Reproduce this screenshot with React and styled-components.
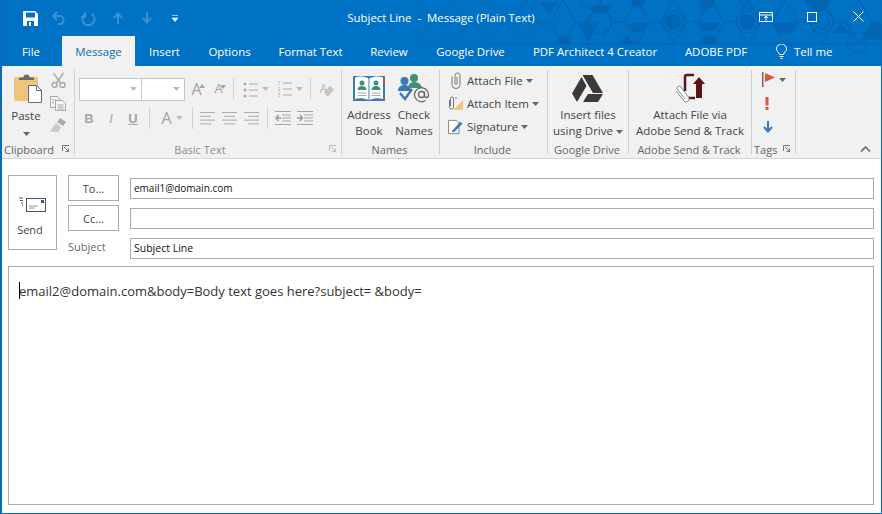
import styled, { createGlobalStyle } from "styled-components";

const GlobalStyle = createGlobalStyle`
  * { box-sizing: border-box; }
  html, body { margin: 0; padding: 0; background: #fff; }
  body { font-family: "Open Sans", "Noto Sans", "Liberation Sans", sans-serif; }
`;

const tabs = [
  { label: "File", width: 62 },
  { label: "Message", width: 73, active: true },
  { label: "Insert", width: 59 },
  { label: "Options", width: 71 },
  { label: "Format Text", width: 91 },
  { label: "Review", width: 66 },
  { label: "Google Drive", width: 97 },
  { label: "PDF Architect 4 Creator", width: 152 },
  { label: "ADOBE PDF", width: 90 },
];

const patternDark = [
  "540,2 558,2 549,14",
  "588,5 612,5 606,13 594,13",
  "578,23 598,23 588,43",
  "627,23 648,23 643,32 632,32",
  "772,23 797,23 790,33 779,33",
  "805,0 832,0 825,10 812,10",
  "841,23 850,33 832,33",
  "872,23 882,23 882,40 863,40",
  "700,23 720,23 714,31 700,31",
  "700,2 716,2 708,9 700,9",
  "620,44 634,44 627,34",
];

function TitlePattern() {
  const nodes = [];
  for (let x = 415; x < 900; x += 37) {
    nodes.push(x);
  }
  return (
    <Pattern viewBox="0 0 882 66" aria-hidden="true">
      <defs>
        <linearGradient id="patternFade" gradientUnits="userSpaceOnUse" x1="390" y1="0" x2="560" y2="0">
          <stop offset="0" stopColor="#0860a6" stopOpacity="0" />
          <stop offset="1" stopColor="#0860a6" stopOpacity="1" />
        </linearGradient>
      </defs>
      <g fill="#0066b3">
        {patternDark.map((p) => (
          <polygon key={p} points={p} />
        ))}
        <circle cx="673" cy="22" r="8" />
        <circle cx="747" cy="22" r="8" />
        <path d="M556 44a7 8 0 0 1 14 0z" />
        <path d="M700 44a9 9 0 0 1 18 0z" />
        <path d="M631 0a7 7 0 0 0 14 0z" />
        <path d="M699 0a8 8 0 0 0 16 0z" />
      </g>
      <g fill="none" stroke="url(#patternFade)" strokeWidth="1">
        {nodes.map((x) => (
          <path key={x} d={`M${x} 44L${x + 13} 22L${x} 0M${x + 13} 22H${x + 24}M${x + 37} 44L${x + 24} 22L${x + 37} 0M${x} 44H${x + 37}`} />
        ))}
        <circle cx="600" cy="22" r="11" />
        <circle cx="673" cy="22" r="11" />
        <circle cx="747" cy="22" r="11" />
        <circle cx="822" cy="22" r="11" />
        <circle cx="822" cy="22" r="7" />
        <circle cx="857" cy="42" r="10" />
        <circle cx="750" cy="0" r="9" />
        <circle cx="592" cy="0" r="9" />
      </g>
    </Pattern>
  );
}

const Ico = ({ w, h, children }) => (
  <svg width={w} height={h} viewBox={`0 0 ${w} ${h}`} aria-hidden="true">
    {children}
  </svg>
);

const Caret = ({ color = "#666" }) => (
  <svg width="7" height="4" viewBox="0 0 7 4" aria-hidden="true">
    <path d="M0 0h7L3.500 4z" fill={color} />
  </svg>
);

const Launcher = ({ color = "#777" }) => (
  <svg width="8" height="8" viewBox="0 0 8 8" aria-hidden="true">
    <path d="M.5 6V.5H7M2 2l4 4M6.500 3.500v3h-3" fill="none" stroke={color} />
  </svg>
);

const PasteIcon = () => (
  <Ico w={29} h={29}>
    <path d="M0 3h24v22a2 2 0 0 1-2 2H2a2 2 0 0 1-2-2z" fill="#efc47c" />
    <path d="M5 6V3.500h4.500a3 3 0 0 1 6 0H20V6z" fill="#6a6a6a" />
    <path d="M14.500 11.500h8l5 5v12h-13z" fill="#fff" stroke="#6a6a6a" />
    <path d="M22.500 11.500v5h5" fill="none" stroke="#6a6a6a" />
  </Ico>
);

const CutIcon = () => (
  <Ico w={15} h={17}>
    <g fill="none" stroke="#aaa" strokeWidth="1.400">
      <path d="M2.500 1l7 10M12.500 1l-7 10" />
      <circle cx="3.500" cy="13" r="2.500" />
      <circle cx="11.500" cy="13" r="2.500" />
    </g>
  </Ico>
);

const CopyIcon = () => (
  <Ico w={16} h={15}>
    <g fill="#f3f3f3" stroke="#aaa">
      <path d="M.5.500h7l2 2v9h-9z" />
      <path d="M5.500 4.500h7l3 3v7h-10z" />
    </g>
    <path d="M2 4h4M2 6.500h2M7.500 9h6M7.500 11h6M7.500 13h6" stroke="#aaa" />
  </Ico>
);

const BrushIcon = () => (
  <Ico w={16} h={15}>
    <path d="M10 0l6 4-3 4-6-4z" fill="#aaa" />
    <path d="M6 5l5 4-3 5-8-.500 2-3z" fill="#c9c9c9" />
  </Ico>
);

const LinesIcon = ({ widths }) => (
  <Ico w={16} h={14}>
    {widths.map(([x, w], i) => (
      <rect key={i} x={x} y={1 + i * 3.800} width={w} height="1" fill="#aaa" />
    ))}
  </Ico>
);

const SizeTriangle = ({ up }) => (
  <Tri width="6" height="4" viewBox="0 0 6 4" aria-hidden="true">
    <path d={up ? "M0 4h6L3 0z" : "M0 0h6L3 4z"} fill="#a5a5a5" />
  </Tri>
);

const ListLines = () => (
  <svg width="9" height="17" viewBox="0 0 9 17" aria-hidden="true">
    <path d="M0 3h9M0 9h9M0 15h9" stroke="#aaa" />
  </svg>
);

const BulletList = () => (
  <ListWrap>
    <svg width="4" height="17" viewBox="0 0 4 17" aria-hidden="true">
      <circle cx="2" cy="3" r="1.500" fill="#aaa" />
      <circle cx="2" cy="9" r="1.500" fill="#aaa" />
      <circle cx="2" cy="15" r="1.500" fill="#aaa" />
    </svg>
    <ListLines />
  </ListWrap>
);

const NumberList = () => (
  <ListWrap>
    <ListDigits>
      <span>1</span>
      <span>2</span>
      <span>3</span>
    </ListDigits>
    <ListLines />
  </ListWrap>
);

const ClearIcon = () => (
  <ClearWrap>
    <ClearLetter>A</ClearLetter>
    <Eraser width="10" height="10" viewBox="0 0 10 10" aria-hidden="true">
      <path d="M0 6l6-6 4 3.500L4.500 10H2.500z" fill="#c4c4c4" />
    </Eraser>
  </ClearWrap>
);

const IndentIcon = ({ flip }) => (
  <Ico w={16} h={14}>
    <path d="M0 .500h16M7 4h9M7 7h9M7 10h9M0 13.500h16" stroke="#a5a5a5" />
    <path d={flip ? "M0 7h5M3 4l2.500 3L3 10" : "M1 7h5M3.500 4L1 7l2.500 3"} fill="none" stroke="#999" strokeWidth="1.300" />
  </Ico>
);

const AddressBook = () => (
  <Ico w={32} h={27}>
    <rect x="0" y="1" width="32" height="25" fill="#3f78b3" />
    <path d="M2 2.500C6 1 11 1 15.500 3.500V25C11 23 6 23 2 24zM30 2.500C26 1 21 1 16.500 3.500V25C21 23 26 23 30 24z" fill="#fff" />
    <g fill="#3f8f7a">
      <circle cx="9" cy="8" r="2.500" />
      <path d="M4.500 15c0-3 2-4 4.500-4s4.500 1 4.500 4z" />
      <circle cx="23" cy="8" r="2.500" />
      <path d="M18.500 15c0-3 2-4 4.500-4s4.500 1 4.500 4z" />
    </g>
    <path d="M4.500 18h9M4.500 20.500h9M18.500 18h9M18.500 20.500h9" stroke="#aaa" />
    <rect x="30" y="3" width="2" height="5" fill="#d24726" />
  </Ico>
);

const CheckNames = () => (
  <Ico w={32} h={30}>
    <circle cx="16" cy="5" r="4" fill="#3f8f7a" />
    <path d="M10 15c0-4 3-6 6-6s7 1 8 6z" fill="#3f8f7a" />
    <circle cx="6.500" cy="8" r="4" fill="#3f78b3" />
    <path d="M0 18c0-4 3-6 6.500-6S13 14 13 18z" fill="#3f78b3" />
    <path d="M2 20l5 6 7-10" fill="none" stroke="#3f78b3" strokeWidth="2.400" />
    <g fill="none" stroke="#666" strokeWidth="1.300">
      <circle cx="23.500" cy="21.500" r="3" />
      <path d="M26.500 18.500v4a2 2 0 0 0 4 0v-1a7 7 0 1 0-3 6" />
    </g>
  </Ico>
);

const ClipIcon = ({ color = "#777" }) => (
  <Ico w={10} h={17}>
    <path d="M1 4.500v8a4 4 0 0 0 8 0V3.500a2.500 2.500 0 0 0-5 0V11.500a1 1 0 0 0 2 0V5" fill="none" stroke={color} />
  </Ico>
);

const AttachItem = () => (
  <Ico w={15} h={15}>
    <path d="M5 14L15 4v10z" fill="#efc47c" />
    <path d="M1.500 4v7a2 2 0 0 0 4 0V2.500a1.500 1.500 0 0 0-3 0V10" fill="none" stroke="#777" />
    <path d="M8 1v2" stroke="#777" />
  </Ico>
);

const SignatureIcon = () => (
  <Ico w={17} h={16}>
    <path d="M.5.500h9l3 3v12H.5z" fill="#fff" stroke="#777" />
    <path d="M5 12l9-10 2.500 2L7.500 13.500 4.500 14z" fill="#3f78b3" />
  </Ico>
);

const DriveIcon = () => (
  <Ico w={31} h={27}>
    <path d="M10.500 0h10l10.500 18h-10zM9.500 2L14.500 11 5 27 0 18.500zM11 27l5-8h15l-5 8z" fill="#3a3a3a" />
  </Ico>
);

const AdobeSend = () => (
  <Ico w={30} h={30}>
    <path d="M19 2h-7a2 2 0 0 0-2 2v14" fill="none" stroke="#5a1a1a" strokeWidth="2.500" />
    <path d="M21 25h6V11h3l-6-7-6 7h3z" fill="#5a1414" />
    <path d="M12 25h8" stroke="#5a1a1a" strokeWidth="2.500" />
    <path d="M1 18l8 10a3 3 0 0 0 5-3L6 14a2 2 0 0 0-3.500 2.500L10 26" fill="#fff" stroke="#888" />
  </Ico>
);

const FlagIcon = () => (
  <Ico w={13} h={15}>
    <rect x="0" y="0" width="1.500" height="15" fill="#6a6a6a" />
    <path d="M3 1l10 4.500L3 10z" fill="#d9593a" />
  </Ico>
);

const BangIcon = () => (
  <Ico w={4} h={13}>
    <path d="M.5 0h3v8.500h-3zM.5 10h3v3h-3z" fill="#dc5a3c" />
  </Ico>
);

const LowIcon = () => (
  <Ico w={10} h={12}>
    <path d="M5 0v10M1 6l4 4.500L9 6" fill="none" stroke="#3f78b3" strokeWidth="2" />
  </Ico>
);

const EnvelopeIcon = () => (
  <Ico w={27} h={15}>
    <path d="M0 1h4M1 3.500h3M2 6h2M3 8.500h1" stroke="#555" />
    <rect x="7.500" y="1.500" width="19" height="13" fill="#fff" stroke="#555" />
    <path d="M10 9h9M10 11h6" stroke="#999" />
    <rect x="22" y="3" width="3" height="3" fill="#1a5fa8" />
  </Ico>
);

export default function App() {
  return (
    <Window>
      <GlobalStyle />
      <Header>
        <TitlePattern />
        <TitleBar>
          <QuickAccess>
            <QatButton>
              <Ico w={15} h={15}>
                <path d="M0 1a1 1 0 0 1 1-1h11l3 3v11a1 1 0 0 1-1 1H1a1 1 0 0 1-1-1z" fill="#fff" />
                <rect x="3" y="1.500" width="9" height="5" fill="#0072c6" />
                <rect x="4" y="10" width="7" height="5" fill="#0072c6" />
                <rect x="6" y="11" width="2" height="4" fill="#fff" />
              </Ico>
            </QatButton>
            <QatButton $dim>
              <Ico w={15} h={14}>
                <path d="M5 1L1 5l4 4M1 5h8a4.500 4.500 0 0 1 0 8H6" fill="none" stroke="#fff" strokeWidth="2" />
              </Ico>
            </QatButton>
            <QatButton $dim>
              <Ico w={15} h={15}>
                <path d="M4.500 3a6 6 0 1 0 6 0M4 1v5H0" fill="none" stroke="#fff" strokeWidth="2" />
              </Ico>
            </QatButton>
            <QatButton $dim>
              <Ico w={10} h={12}>
                <path d="M5 12V2M1 6l4-4.500L9 6" fill="none" stroke="#fff" strokeWidth="2" />
              </Ico>
            </QatButton>
            <QatButton $dim>
              <Ico w={10} h={12}>
                <path d="M5 0v10M1 6l4 4.500L9 6" fill="none" stroke="#fff" strokeWidth="2" />
              </Ico>
            </QatButton>
            <QatButton>
              <Ico w={7} h={7}>
                <path d="M0 .500h6M0 3h6L3 6.500z" fill="#fff" stroke="#fff" strokeWidth=".6" />
              </Ico>
            </QatButton>
          </QuickAccess>
          <WindowTitle>Subject Line&nbsp; -&nbsp; Message (Plain Text)</WindowTitle>
          <WindowControls>
            <WinButton>
              <Ico w={14} h={10}>
                <path d="M.5.500h13v9H.5zM.5 3h13M7 8.500V4M5 6l2-2 2 2" fill="none" stroke="#fff" />
              </Ico>
            </WinButton>
            <WinButton>
              <Ico w={10} h={10}>
                <rect x=".5" y=".5" width="9" height="9" fill="none" stroke="#fff" />
              </Ico>
            </WinButton>
            <WinButton>
              <Ico w={11} h={11}>
                <path d="M.5.500l10 10M10.500.500l-10 10" stroke="#fff" />
              </Ico>
            </WinButton>
          </WindowControls>
        </TitleBar>
        <TabRow>
          {tabs.map((t) => (
            <Tab key={t.label} $width={t.width} $active={t.active}>
              {t.label}
            </Tab>
          ))}
          <TellMe>
            <svg width="11" height="15" viewBox="0 0 11 15" aria-hidden="true">
              <path d="M3.500 10.500C3 8 .5 7.500.5 5a5 5 0 0 1 10 0c0 2.500-2.500 3-3 5.500zM3.500 12.500h4M4.500 14.500h2" fill="none" stroke="#fff" />
            </svg>
            Tell me
          </TellMe>
        </TabRow>
      </Header>

      <Ribbon>
        <Group $width={73}>
          <GroupBody>
            <PasteColumn>
              <PasteGlyph><PasteIcon /></PasteGlyph>
              <PasteLabel>Paste</PasteLabel>
              <Caret />
            </PasteColumn>
            <ClipColumn>
              <CutIcon />
              <CopyIcon />
              <BrushIcon />
            </ClipColumn>
          </GroupBody>
          <GroupFoot>
            <GroupLabel>Clipboard</GroupLabel>
            <Launcher />
          </GroupFoot>
        </Group>

        <Group $width={267}>
          <BasicBody>
            <ToolRow $pad={1}>
              <Combo $width={63}><Caret color="#bbb" /></Combo>
              <Combo $width={44}><Caret color="#bbb" /></Combo>
              <ToolSlot $width={22} $ml={3} $tight><SizeLetter $size={16}>A</SizeLetter><SizeTriangle up /></ToolSlot>
              <ToolSlot $width={22} $tight><SizeLetter $size={13}>A</SizeLetter><SizeTriangle /></ToolSlot>
              <ToolSep $ml={2} />
              <ToolSlot $width={27} $ml={8}><BulletList /><Caret color="#bbb" /></ToolSlot>
              <ToolSlot $width={27} $ml={7}><NumberList /><Caret color="#bbb" /></ToolSlot>
              <ToolSep $ml={7} />
              <ToolSlot $width={24} $ml={4}><ClearIcon /></ToolSlot>
            </ToolRow>
            <ToolRow>
              <ToolSlot $width={22}><FontLetter>B</FontLetter></ToolSlot>
              <ToolSlot $width={22}><FontLetter $italic>I</FontLetter></ToolSlot>
              <ToolSlot $width={22}><FontLetter $under>U</FontLetter></ToolSlot>
              <ToolSep $ml={5} />
              <ToolSlot $width={32} $ml={6}><ColorA>A</ColorA><Caret color="#bbb" /></ToolSlot>
              <ToolSep $ml={4} />
              <ToolSlot $width={22} $ml={4}><LinesIcon widths={[[0, 15], [0, 11], [0, 15], [0, 11]]} /></ToolSlot>
              <ToolSlot $width={22}><LinesIcon widths={[[0, 15], [2, 11], [0, 15], [2, 11]]} /></ToolSlot>
              <ToolSlot $width={22}><LinesIcon widths={[[0, 15], [4, 11], [0, 15], [4, 11]]} /></ToolSlot>
              <ToolSep $ml={4} />
              <ToolSlot $width={22} $ml={4}><IndentIcon /></ToolSlot>
              <ToolSlot $width={22}><IndentIcon flip /></ToolSlot>
            </ToolRow>
          </BasicBody>
          <GroupFoot>
            <GroupLabel $dim $center $shift={6}>Basic Text</GroupLabel>
            <Launcher color="#bbb" />
          </GroupFoot>
        </Group>

        <Group $width={98}>
          <GroupBody $pad={4}>
            <BigButton $width={46}>
              <BigIcon><AddressBook /></BigIcon>
              <BigLabel>Address<br />Book</BigLabel>
            </BigButton>
            <BigButton $width={44}>
              <BigIcon><CheckNames /></BigIcon>
              <BigLabel>Check<br />Names</BigLabel>
            </BigButton>
          </GroupBody>
          <GroupFoot><GroupLabel $center>Names</GroupLabel></GroupFoot>
        </Group>

        <Group $width={108}>
          <IncludeList>
            <IncludeRow><IncludeIcon><ClipIcon /></IncludeIcon>Attach File<Caret /></IncludeRow>
            <IncludeRow><IncludeIcon><AttachItem /></IncludeIcon>Attach Item<Caret /></IncludeRow>
            <IncludeRow><IncludeIcon><SignatureIcon /></IncludeIcon>Signature<Caret /></IncludeRow>
          </IncludeList>
          <GroupFoot><GroupLabel $center>Include</GroupLabel></GroupFoot>
        </Group>

        <Group $width={81}>
          <GroupBody $center>
            <BigButton>
              <BigIcon><DriveIcon /></BigIcon>
              <BigLabel>Insert files<br />using Drive <Caret /></BigLabel>
            </BigButton>
          </GroupBody>
          <GroupFoot><GroupLabel $center>Google Drive</GroupLabel></GroupFoot>
        </Group>

        <Group $width={123}>
          <GroupBody $center>
            <BigButton>
              <BigIcon><AdobeSend /></BigIcon>
              <BigLabel>Attach File via<br />Adobe Send &amp; Track</BigLabel>
            </BigButton>
          </GroupBody>
          <GroupFoot><GroupLabel $center>Adobe Send &amp; Track</GroupLabel></GroupFoot>
        </Group>

        <Group $width={44}>
          <TagsColumn>
            <TagRow><FlagIcon /><Caret /></TagRow>
            <TagRow $indent={3}><BangIcon /></TagRow>
            <TagRow $indent={1}><LowIcon /></TagRow>
          </TagsColumn>
          <GroupFoot>
            <GroupLabel>Tags</GroupLabel>
            <Launcher />
          </GroupFoot>
        </Group>

        <Collapse>
          <svg width="11" height="6" viewBox="0 0 11 6" aria-hidden="true">
            <path d="M1 5.500l4.500-4.500 4.500 4.500" fill="none" stroke="#666" strokeWidth="1.600" />
          </svg>
        </Collapse>
      </Ribbon>

      <Compose>
        <Fields>
          <SendButton>
            <EnvelopeIcon />
            <SendLabel>Send</SendLabel>
          </SendButton>
          <FieldGrid>
            <AddressButton>To...</AddressButton>
            <FieldInput $size={10}>email1@domain.com</FieldInput>
            <AddressButton>Cc...</AddressButton>
            <FieldInput />
            <SubjectLabel>Subject</SubjectLabel>
            <FieldInput>Subject Line</FieldInput>
          </FieldGrid>
        </Fields>
        <BodyBox>
          <TextCaret />
          email2@domain.com&amp;body=Body text goes here?subject= &amp;body=
        </BodyBox>
      </Compose>
    </Window>
  );
}

const Window = styled.div`
  width: 882px;
  height: 514px;
  display: flex;
  flex-direction: column;
  overflow: hidden;
  border-left: 2px solid #0a6cb6;
  border-right: 1px solid #0a6cb6;
  border-bottom: 1px solid #0a6cb6;
  background: #fff;
`;

const Header = styled.header`
  position: relative;
  margin-left: -2px;
  margin-right: -1px;
  height: 66px;
  background: #0072c6;
  flex: none;
`;

const Pattern = styled.svg`
  position: absolute;
  inset: 0;
  width: 882px;
  height: 66px;
`;

const TitleBar = styled.div`
  position: relative;
  height: 36px;
  display: grid;
  grid-template-columns: 1fr auto 1fr;
  align-items: center;
`;

const QuickAccess = styled.div`
  display: flex;
  align-items: center;
  padding-left: 16px;
  height: 100%;
`;

const QatButton = styled.div`
  width: 29px;
  height: 100%;
  display: flex;
  align-items: center;
  justify-content: center;
  opacity: ${(p) => (p.$dim ? 0.22 : 1)};
`;

const WindowTitle = styled.div`
  color: #fff;
  font-size: 11.400px;
  white-space: nowrap;
  padding-bottom: 2px;
`;

const WindowControls = styled.div`
  display: flex;
  justify-content: flex-end;
  align-items: center;
  height: 100%;
  padding-right: 1px;
`;

const WinButton = styled.div`
  width: 46px;
  height: 100%;
  display: flex;
  align-items: center;
  justify-content: center;
  padding-bottom: 3px;
`;

const TabRow = styled.nav`
  position: relative;
  height: 30px;
  display: flex;
`;

const Tab = styled.div`
  width: ${(p) => p.$width}px;
  height: 30px;
  display: flex;
  align-items: center;
  justify-content: center;
  font-size: 11.450px;
  white-space: nowrap;
  padding-top: 1px;
  color: ${(p) => (p.$active ? "#0a6cb8" : "#fff")};
  background: ${(p) => (p.$active ? "#f1f1f1" : "transparent")};
`;

const TellMe = styled.div`
  display: flex;
  align-items: center;
  gap: 7px;
  margin-left: 15px;
  font-size: 11.450px;
  color: #fff;
`;

const Ribbon = styled.section`
  height: 93px;
  flex: none;
  display: flex;
  background: #f1f1f1;
  border-bottom: 1px solid #d4d4d4;
`;

const Group = styled.div`
  width: ${(p) => p.$width}px;
  flex: none;
  display: flex;
  flex-direction: column;
  margin: 4px 0 4px;
  border-right: 1px solid #d0d0d0;
`;

const GroupBody = styled.div`
  flex: 1;
  display: flex;
  justify-content: ${(p) => (p.$center ? "center" : "flex-start")};
  padding-left: ${(p) => p.$pad || 0}px;
`;

const GroupFoot = styled.div`
  height: 15px;
  display: flex;
  align-items: center;
  justify-content: space-between;
  padding: 5px 4px 0 2px;
  flex: none;
`;

const GroupLabel = styled.span`
  font-size: 11px;
  color: ${(p) => (p.$dim ? "#8c8c8c" : "#666")};
  white-space: nowrap;
  flex: ${(p) => (p.$center ? 1 : "none")};
  text-align: ${(p) => (p.$center ? "center" : "left")};
  padding-right: ${(p) => p.$shift || 0}px;
`;

const PasteColumn = styled.div`
  width: 48px;
  display: flex;
  flex-direction: column;
  align-items: center;
  padding-top: 4px;
`;

const PasteGlyph = styled.div`
  margin-left: 4px;
  height: 29px;
`;

const PasteLabel = styled.span`
  font-size: 11.500px;
  color: #444;
  margin: 5px 0 9px;
`;

const ClipColumn = styled.div`
  width: 16px;
  display: flex;
  flex-direction: column;
  align-items: center;
  gap: 7px;
  padding-top: 2px;
`;

const BasicBody = styled.div`
  flex: 1;
  display: flex;
  flex-direction: column;
  gap: 7px;
  padding: 8px 0 0 3px;
`;

const ToolRow = styled.div`
  display: flex;
  align-items: center;
  height: 22px;
  padding-left: ${(p) => p.$pad || 0}px;
`;

const Combo = styled.div`
  width: ${(p) => p.$width}px;
  height: 23px;
  background: #fff;
  border: 1px solid #c6c6c6;
  margin-right: -1px;
  display: flex;
  align-items: center;
  justify-content: flex-end;
  padding-right: 4px;
`;

const ToolSlot = styled.div`
  width: ${(p) => p.$width}px;
  margin-left: ${(p) => p.$ml || 0}px;
  display: flex;
  align-items: center;
  justify-content: center;
  gap: ${(p) => (p.$tight ? 0 : 4)}px;
  flex: none;
`;

const ToolSep = styled.div`
  width: 1px;
  height: 22px;
  background: #d0d0d0;
  margin-left: ${(p) => p.$ml || 4}px;
  flex: none;
`;

const SizeLetter = styled.span`
  font-size: ${(p) => p.$size}px;
  line-height: 1;
  color: #a5a5a5;
  align-self: flex-end;
  padding-bottom: 1px;
`;

const Tri = styled.svg`
  align-self: flex-start;
  margin: 3px 0 0 -3px;
`;

const ListWrap = styled.div`
  width: 15px;
  display: flex;
  justify-content: space-between;
`;

const ListDigits = styled.div`
  width: 5px;
  display: flex;
  flex-direction: column;
  align-items: center;
  font-size: 4.400px;
  line-height: 6px;
  color: #999;
`;

const ClearWrap = styled.div`
  display: flex;
  align-items: flex-start;
`;

const ClearLetter = styled.span`
  font-size: 12px;
  line-height: 13px;
  color: #b5b5b5;
  margin-right: -3px;
`;

const Eraser = styled.svg`
  margin-top: 4px;
`;

const FontLetter = styled.span`
  font-family: "Liberation Sans", sans-serif;
  font-size: 13px;
  font-weight: ${(p) => (p.$italic ? 400 : 700)};
  font-style: ${(p) => (p.$italic ? "italic" : "normal")};
  text-decoration: ${(p) => (p.$under ? "underline" : "none")};
  color: #a5a5a5;
`;

const ColorA = styled.span`
  font-size: 16px;
  line-height: 1;
  color: #a5a5a5;
`;

const BigButton = styled.div`
  width: ${(p) => (p.$width ? `${p.$width}px` : "auto")};
  display: flex;
  flex-direction: column;
  align-items: center;
`;

const BigIcon = styled.div`
  height: 36px;
  display: flex;
  align-items: center;
  justify-content: center;
`;

const BigLabel = styled.div`
  font-size: 11.500px;
  line-height: 16px;
  color: #444;
  text-align: center;
  white-space: nowrap;
  padding-top: 1px;

  svg {
    vertical-align: middle;
  }
`;

const IncludeList = styled.div`
  flex: 1;
  display: flex;
  flex-direction: column;
  gap: 2px;
  padding: 0 0 0 8px;
`;

const IncludeRow = styled.div`
  height: 21px;
  display: flex;
  align-items: center;
  gap: 3px;
  font-size: 11.500px;
  color: #444;
  white-space: nowrap;
`;

const IncludeIcon = styled.span`
  width: 15px;
  margin-right: 1px;
  display: flex;
  justify-content: center;
`;

const TagsColumn = styled.div`
  flex: 1;
  display: flex;
  flex-direction: column;
  padding: 2px 0 0 10px;
  gap: 8.500px;
`;

const TagRow = styled.div`
  height: 15px;
  display: flex;
  align-items: center;
  gap: 4px;
  padding-left: ${(p) => p.$indent || 0}px;
`;

const Collapse = styled.div`
  flex: 1;
  display: flex;
  align-items: flex-end;
  justify-content: flex-end;
  padding: 0 10px 6px 0;
`;

const Compose = styled.main`
  flex: 1;
  display: flex;
  flex-direction: column;
  padding: 16px 7px 8px 6px;
  background: #fff;
`;

const Fields = styled.div`
  display: flex;
  gap: 11px;
`;

const SendButton = styled.div`
  width: 49px;
  height: 75px;
  border: 1px solid #ababab;
  display: flex;
  flex-direction: column;
  align-items: center;
  padding-top: 21px;
  gap: 10px;
  font-size: 11px;
  color: #444;
  background: #fff;
`;

const SendLabel = styled.span`
  padding-right: 5px;
`;

const FieldGrid = styled.div`
  flex: 1;
  display: grid;
  grid-template-columns: 51px 1fr;
  grid-template-rows: 26px 26px 26px;
  column-gap: 11px;
  row-gap: 4px;
  align-items: center;
`;

const AddressButton = styled.div`
  height: 26px;
  border: 1px solid #ababab;
  display: flex;
  align-items: center;
  justify-content: center;
  font-size: 11px;
  color: #444;
`;

const FieldInput = styled.div`
  height: 21px;
  border: 1px solid #ababab;
  display: flex;
  align-items: center;
  padding-left: 3px;
  font-size: ${(p) => p.$size || 10.5}px;
  color: #111;
`;

const SubjectLabel = styled.div`
  font-size: 11px;
  color: #6a6a6a;
  padding-bottom: 4px;
`;

const BodyBox = styled.div`
  flex: 1;
  margin-top: 5px;
  border: 1px solid #ababab;
  padding: 14px 10px;
  font-size: 13px;
  line-height: 20px;
  color: #333;
  white-space: nowrap;
`;

const TextCaret = styled.span`
  display: inline-block;
  width: 1px;
  height: 17px;
  background: #000;
  vertical-align: -3px;
  margin-right: -1px;
`;
